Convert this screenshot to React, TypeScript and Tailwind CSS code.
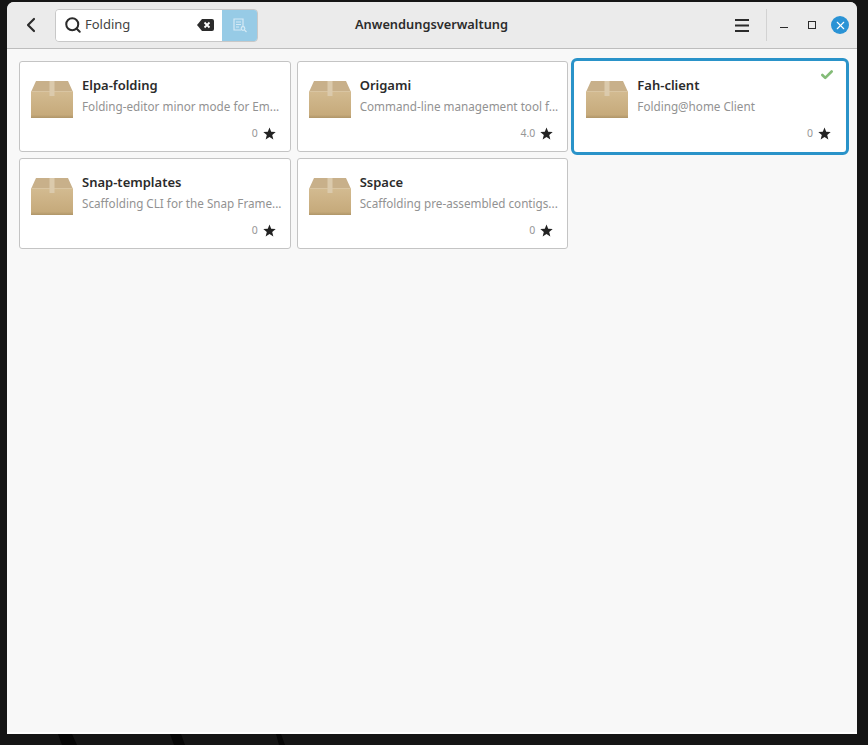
import { Search, ChevronLeft, Check, X } from 'lucide-react'

type App = { name: string; desc: string; rating: string; selected?: boolean }

const APPS: App[] = [
  { name: 'Elpa-folding', desc: 'Folding-editor minor mode for Em...', rating: '0' },
  { name: 'Origami', desc: 'Command-line management tool f...', rating: '4.0' },
  { name: 'Fah-client', desc: 'Folding@home Client', rating: '0', selected: true },
  { name: 'Snap-templates', desc: 'Scaffolding CLI for the Snap Frame...', rating: '0' },
  { name: 'Sspace', desc: 'Scaffolding pre-assembled contigs...', rating: '0' },
]

function BoxIcon() {
  return (
    <svg width="42" height="38" viewBox="0 0 42 38" className="shrink-0">
      <defs>
        <linearGradient id="boxFront" x1="0" y1="0" x2="0" y2="1">
          <stop offset="0" stopColor="#d3bb91" />
          <stop offset="0.88" stopColor="#c6aa7b" />
          <stop offset="1" stopColor="#af9568" />
        </linearGradient>
      </defs>
      <path d="M5 1h32l5 11H0z" fill="#c8b08a" />
      <rect x="0" y="11" width="42" height="27" fill="url(#boxFront)" />
      <rect x="0" y="11" width="42" height="1" fill="#d9c5a2" />
      <rect x="18.500" y="1" width="5" height="15" fill="#dbcaac" />
    </svg>
  )
}

function StarIcon() {
  return (
    <svg width="13" height="13" viewBox="0 0 13 13">
      <path d="M6.500 0.500l1.700 4.300 4.500 0.300-3.500 2.900 1.150 4.500-3.850-2.500-3.850 2.500 1.150-4.500-3.500-2.900 4.500-0.300z" fill="#222222" />
    </svg>
  )
}

function Card({ app }: { app: App }) {
  return (
    <div
      className={`relative flex h-[91px] items-start rounded-[3px] border bg-white pl-[11px] pt-[18px] ${
        app.selected ? 'border-white outline-[3px] outline-[#2a93c9]' : 'border-[#c4c4c4]'
      }`}
    >
      <BoxIcon />
      <div className="ml-[9px] min-w-0 flex-1 pr-2">
        <div className="-mt-[4px] text-[13px] font-semibold leading-[18px] text-[#2b2b2b]">{app.name}</div>
        <div className="mt-[3px] whitespace-nowrap text-[11.700px] leading-[18px] text-[#929292]">{app.desc}</div>
      </div>
      {app.selected && (
        <Check size={14} strokeWidth={4.500} className="absolute right-[11px] top-[6px] text-[#84bc78]" />
      )}
      <div className="absolute bottom-[9px] right-[14px] flex items-center gap-[5px]">
        <span className="text-[10.500px] leading-[18px] text-[#969696]">{app.rating}</span>
        <StarIcon />
      </div>
    </div>
  )
}

export default function App() {
  return (
    <div className="relative h-[745px] w-[868px] overflow-hidden bg-[#151515] pl-[7px] pt-[2px] font-['Noto_Sans',sans-serif]">
      {/* wallpaper streaks */}
      <svg width="868" height="745" className="absolute inset-0">
        <path d="M58 734h14l5 11H62z M170 734h11l4 11h-11z M276 734h5l4 11h-6z" fill="#070707" />
      </svg>
      <div className="relative flex h-[732px] w-[850px] flex-col overflow-hidden rounded-t-[7px] bg-[#f8f8f8]">
        <header className="flex h-[47px] shrink-0 items-center border-b border-[#bdbdbd] bg-[#ebebeb] pl-[14px] pr-[8px]">
          <ChevronLeft size={24} strokeWidth={2.200} className="-ml-[2px] text-[#2b2b2b]" />
          <div className="ml-[12px] flex h-[33px] w-[203px] overflow-hidden rounded-[4px] border border-[#c8c8c8]">
            <div className="flex flex-1 items-center bg-white pl-[8px] pr-[8px]">
              <Search size={18} strokeWidth={2.700} className="text-[#2b2b2b]" />
              <span className="ml-[3px] flex-1 text-[13px] text-[#444444]">Folding</span>
              <svg width="17" height="12" viewBox="0 0 17 12">
                <path d="M5 0h10a2 2 0 0 1 2 2v8a2 2 0 0 1-2 2H5L0 6z" fill="#2b2b2b" />
                <path d="M7.500 3.500l5 5m0-5l-5 5" stroke="#ffffff" strokeWidth="1.800" />
              </svg>
            </div>
            <div className="flex w-[35px] items-center justify-center bg-[#97cbe6]">
              <svg width="16" height="16" viewBox="0 0 16 16" fill="none" stroke="#d5eaf5" strokeWidth="1.200">
                <path d="M11 10V2H2v11h7" />
                <path d="M4 5h5M4 7.500h5M4 10h3" />
                <circle cx="11" cy="11.500" r="1.800" />
                <path d="M12.500 13l2 2" />
              </svg>
            </div>
          </div>
          <div className="ml-[97px] text-[12.800px] font-semibold text-[#2b2b2b]">Anwendungsverwaltung</div>
          <div className="flex-1" />
          <svg width="14" height="13" viewBox="0 0 14 13" fill="#2b2b2b">
            <rect x="0" y="0" width="14" height="2" />
            <rect x="0" y="5.500" width="14" height="2" />
            <rect x="0" y="11" width="14" height="2" />
          </svg>
          <div className="ml-[17px] h-[32px] w-px bg-[#d2d2d2]" />
          <div className="ml-[13px] mt-[5px] h-px w-[8px] bg-[#2b2b2b]" />
          <div className="ml-[20px] h-[8px] w-[8px] border border-[#2b2b2b]" />
          <div className="ml-[15px] flex h-[18px] w-[18px] items-center justify-center rounded-full bg-[#2a93d5]">
            <X size={13} strokeWidth={2} className="text-white" />
          </div>
        </header>
        <main className="grid flex-1 grid-cols-3 content-start gap-x-[6px] gap-y-[6px] pl-[12px] pr-[11px] pt-[12px]">
          {APPS.map(app => (
            <Card key={app.name} app={app} />
          ))}
        </main>
        <div className="h-[2px] shrink-0 bg-white" />
      </div>
    </div>
  )
}
